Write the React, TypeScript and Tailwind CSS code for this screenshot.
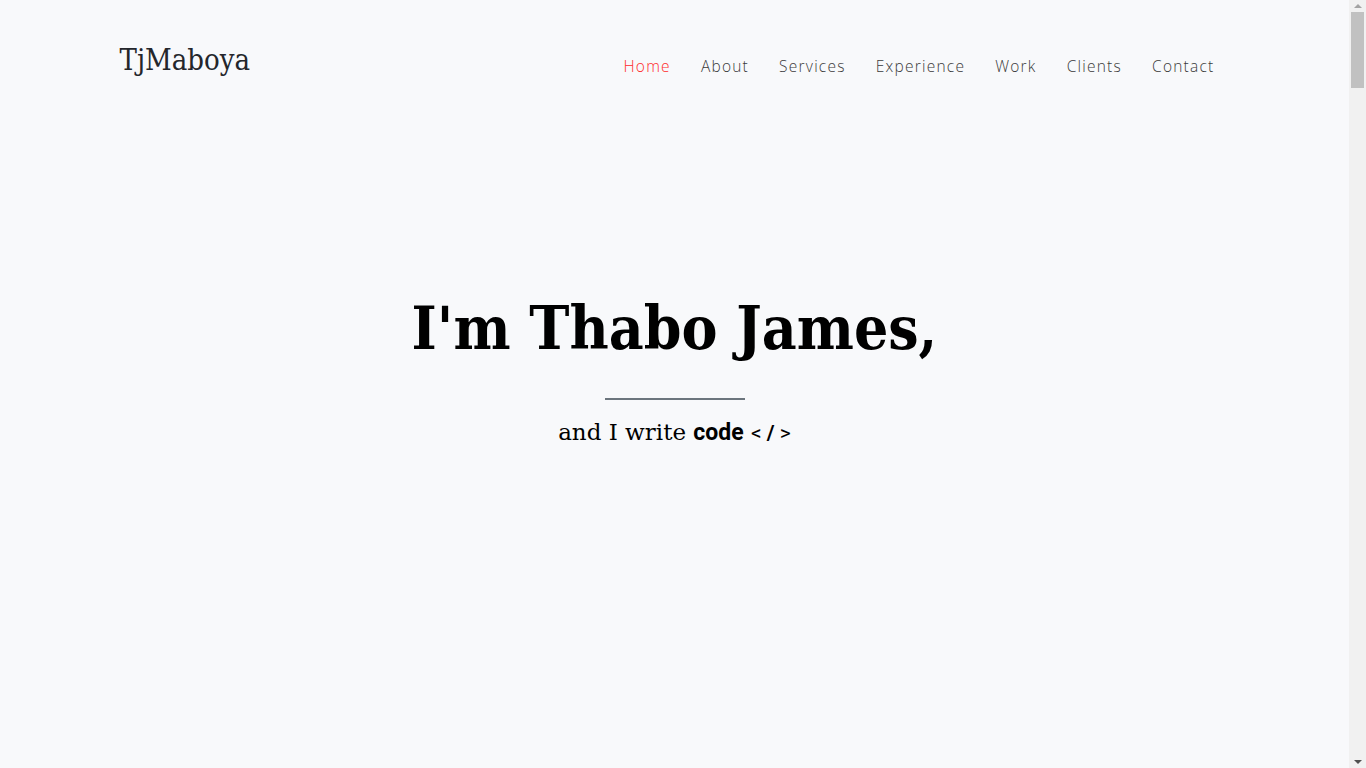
const links = ["Home", "About", "Services", "Experience", "Work", "Clients", "Contact"];

function Scrollbar() {
  return (
    <div className="w-[17px] h-screen bg-[#f1f1f1] flex flex-col items-center shrink-0">
      <div className="h-[12px] flex items-center justify-center">
        <div className="w-0 h-0 border-x-[4px] border-x-transparent border-b-[4px] border-b-[#a3a3a3]"></div>
      </div>
      <div className="w-[13px] h-[76px] bg-[#c1c1c1]"></div>
      <div className="flex-1"></div>
      <div className="h-[12px] flex items-center justify-center">
        <div className="w-0 h-0 border-x-[4px] border-x-transparent border-t-[4px] border-t-[#505050]"></div>
      </div>
    </div>
  );
}

export default function App() {
  return (
    <div className="flex h-screen overflow-hidden bg-[#f8f9fb]">
      <main className="flex-1">
        <header className="max-w-[1140px] mx-auto px-[15px] pt-[40px] flex items-start justify-between">
          <a
            href="#"
            className="text-[29px] leading-[40px] text-[#24262b] [font-family:'DejaVu_Serif_Condensed','DejaVu_Serif',serif]"
          >
            TjMaboya
          </a>
          <nav className="flex gap-[30px] pt-[15px] pr-[15px] [font-family:'Open_Sans',sans-serif] font-light text-[15.5px] tracking-[0.08em]">
            {links.map((l, i) => (
              <a
                key={l}
                href="#"
                className={i === 0 ? "text-[#ff2a2a]" : "text-[#3a3a3a]"}
              >
                {l}
              </a>
            ))}
          </nav>
        </header>

        <section className="flex flex-col items-center pt-[208px]">
          <h1 className="text-[60px] leading-[80px] font-bold text-black [font-family:'DejaVu_Serif_Condensed','DejaVu_Serif',serif]">
            I'm Thabo James,
          </h1>
          <div className="w-[140px] h-[2px] bg-[#6c757d] mt-[30px]"></div>
          <p className="mt-[15px] text-[23px] text-black [font-family:'DejaVu_Serif',serif]">
            and I write{" "}
            <span className="font-bold [font-family:Roboto,sans-serif]">code</span>{" "}
            <span className="[font-family:Roboto,sans-serif] text-[21px]">
              &lt; <b>/</b> &gt;
            </span>
          </p>
        </section>
      </main>
      <Scrollbar />
    </div>
  );
}
